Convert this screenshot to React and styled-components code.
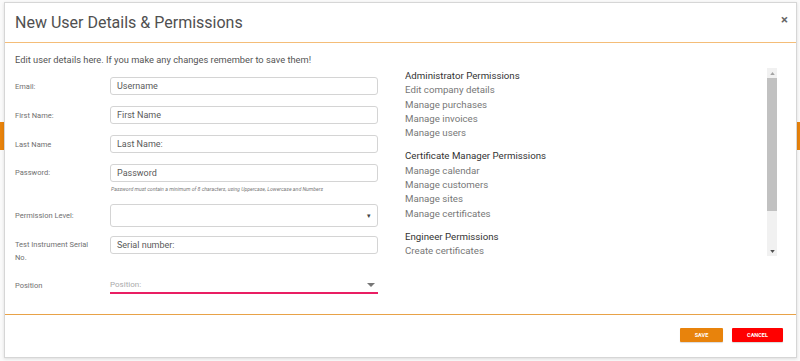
import React from 'react';
import styled, { createGlobalStyle } from 'styled-components';

const GlobalStyle = createGlobalStyle`
  html, body {
    margin: 0;
    padding: 0;
    background: #ffffff;
    font-family: Roboto, "Liberation Sans", sans-serif;
  }
`;

const Page = styled.div`
  position: relative;
  width: 800px;
  height: 361px;
  overflow: hidden;
  background: #fafafa;
`;

const PageBar = styled.div`
  margin-top: 122px;
  height: 28px;
  background: #e8830c;
`;

const Modal = styled.div`
  position: absolute;
  top: 2px;
  left: 4px;
  width: 791px;
  height: 354px;
  background: #fff;
  border: 1px solid #d6d6d6;
  box-shadow: 0 1px 3px rgba(0, 0, 0, 0.12);
  display: flex;
  flex-direction: column;
`;

const Header = styled.div`
  height: 39px;
  flex: none;
  display: flex;
  align-items: center;
  justify-content: space-between;
  padding: 0 8px 0 10px;
  border-bottom: 1px solid #f4bd78;
`;

const Title = styled.h4`
  margin: 0;
  font-size: 16px;
  font-weight: 400;
  color: #505050;
`;

const Close = styled.span`
  font-size: 13px;
  font-weight: 700;
  color: #666;
  line-height: 1;
  margin-top: -6px;
`;

const Body = styled.div`
  flex: 1;
  padding: 11px 19px 0 10px;
  display: flex;
  flex-direction: column;
`;

const Intro = styled.p`
  margin: 0;
  font-size: 9.3px;
  color: #555;
  line-height: 12px;
`;

const Columns = styled.div`
  display: flex;
  gap: 27px;
`;

const FormCol = styled.div`
  width: 363px;
  flex: none;
  padding-top: 11px;
`;

const Row = styled.div`
  display: flex;
  align-items: ${(p) => (p.top ? 'flex-start' : 'center')};
  margin-bottom: ${(p) => p.gap ?? 11}px;
`;

const Label = styled.label`
  width: 95px;
  flex: none;
  font-size: 7.5px;
  color: #707070;
  line-height: 13px;
  padding-right: 12px;
  box-sizing: border-box;
  padding-top: ${(p) => (p.top ? 2 : 0)}px;
`;

const Field = styled.div`
  flex: 1;
`;

const Input = styled.div`
  height: 18px;
  box-sizing: border-box;
  border: 1px solid #d4d4d4;
  border-radius: 3px;
  padding: 0 6px;
  font-size: 9px;
  color: #5a5a5a;
  display: flex;
  align-items: center;
`;

const Select = styled(Input)`
  height: 23px;
  justify-content: flex-end;
  font-size: 7px;
  color: #444;
`;

const Hint = styled.div`
  font-size: 5.2px;
  font-style: italic;
  color: #777;
  margin-top: 4px;
  padding-left: 1px;
`;

const Dropdown = styled.div`
  height: 17px;
  box-sizing: border-box;
  border-bottom: 2px solid #e91e63;
  display: flex;
  align-items: center;
  justify-content: space-between;
  font-size: 8px;
  color: #aaa;
  padding-right: 3px;
`;

const Caret = styled.span`
  width: 0;
  height: 0;
  border-left: 4px solid transparent;
  border-right: 4px solid transparent;
  border-top: 4px solid #777;
  margin-top: 1px;
`;

const PermPanel = styled.div`
  flex: 1;
  height: 188px;
  margin-top: 2px;
  display: flex;
`;

const PermList = styled.div`
  flex: 1;
  overflow: hidden;
`;

const Scrollbar = styled.div`
  width: 10px;
  flex: none;
  background: #f1f1f1;
  display: flex;
  flex-direction: column;
`;

const ScrollArrow = styled.div`
  height: 10px;
  flex: none;
  display: flex;
  align-items: center;
  justify-content: center;
`;

const Thumb = styled.div`
  height: 133px;
  background: #c1c1c1;
  flex: none;
`;

const Spacer = styled.div`
  flex: 1;
`;

const Group = styled.div`
  margin-bottom: 8px;
`;

const GroupTitle = styled.div`
  font-size: 9.7px;
  color: #333;
  line-height: 14.3px;
  padding-top: 1px;
`;

const Item = styled.div`
  font-size: 9.7px;
  color: #777;
  line-height: 14.3px;
`;

const Footer = styled.div`
  height: 40px;
  flex: none;
  border-top: 1px solid #e8a248;
  display: flex;
  align-items: center;
  justify-content: flex-end;
  gap: 9px;
  padding: 0 13px 2px 0;
`;

const Button = styled.button`
  height: 14px;
  border: none;
  border-radius: 1px;
  background: ${(p) => p.bg};
  color: #fff;
  font-family: Roboto, "Liberation Sans", sans-serif;
  font-size: 5.5px;
  font-weight: 700;
  padding: 0;
  width: ${(p) => p.w}px;
  box-shadow: 0 1px 1px rgba(0, 0, 0, 0.15);
`;

const permissions = [
  { title: 'Administrator Permissions', items: ['Edit company details', 'Manage purchases', 'Manage invoices', 'Manage users'] },
  { title: 'Certificate Manager Permissions', items: ['Manage calendar', 'Manage customers', 'Manage sites', 'Manage certificates'] },
  { title: 'Engineer Permissions', items: ['Create certificates'] },
];

const App = () => (
  <Page>
    <GlobalStyle />
    <PageBar />
    <Modal>
      <Header>
        <Title>New User Details &amp; Permissions</Title>
        <Close>×</Close>
      </Header>
      <Body>
        <Intro>Edit user details here. If you make any changes remember to save them!</Intro>
        <Columns>
          <FormCol>
            <Row>
              <Label>Email:</Label>
              <Field><Input>Username</Input></Field>
            </Row>
            <Row>
              <Label>First Name:</Label>
              <Field><Input>First Name</Input></Field>
            </Row>
            <Row>
              <Label>Last Name</Label>
              <Field><Input>Last Name:</Input></Field>
            </Row>
            <Row top gap={12}>
              <Label top>Password:</Label>
              <Field>
                <Input>Password</Input>
                <Hint>Password must contain a minimum of 8 characters, using Uppercase, Lowercase and Numbers</Hint>
              </Field>
            </Row>
            <Row gap={9}>
              <Label>Permission Level:</Label>
              <Field><Select>▾</Select></Field>
            </Row>
            <Row top gap={13}>
              <Label top>Test Instrument Serial No.</Label>
              <Field><Input>Serial number:</Input></Field>
            </Row>
            <Row>
              <Label>Position</Label>
              <Field>
                <Dropdown>
                  Position:
                  <Caret />
                </Dropdown>
              </Field>
            </Row>
          </FormCol>
          <PermPanel>
            <PermList>
              {permissions.map((g) => (
                <Group key={g.title}>
                  <GroupTitle>{g.title}</GroupTitle>
                  {g.items.map((i) => <Item key={i}>{i}</Item>)}
                </Group>
              ))}
            </PermList>
            <Scrollbar>
              <ScrollArrow>
                <svg width="5" height="3" viewBox="0 0 6 4"><polygon points="3,0 6,4 0,4" fill="#a3a3a3" /></svg>
              </ScrollArrow>
              <Thumb />
              <Spacer />
              <ScrollArrow>
                <svg width="5" height="3" viewBox="0 0 6 4"><polygon points="0,0 6,0 3,4" fill="#505050" /></svg>
              </ScrollArrow>
            </Scrollbar>
          </PermPanel>
        </Columns>
      </Body>
      <Footer>
        <Button bg="#e8830c" w={43}>SAVE</Button>
        <Button bg="#ff0000" w={51}>CANCEL</Button>
      </Footer>
    </Modal>
  </Page>
);

export default App;
